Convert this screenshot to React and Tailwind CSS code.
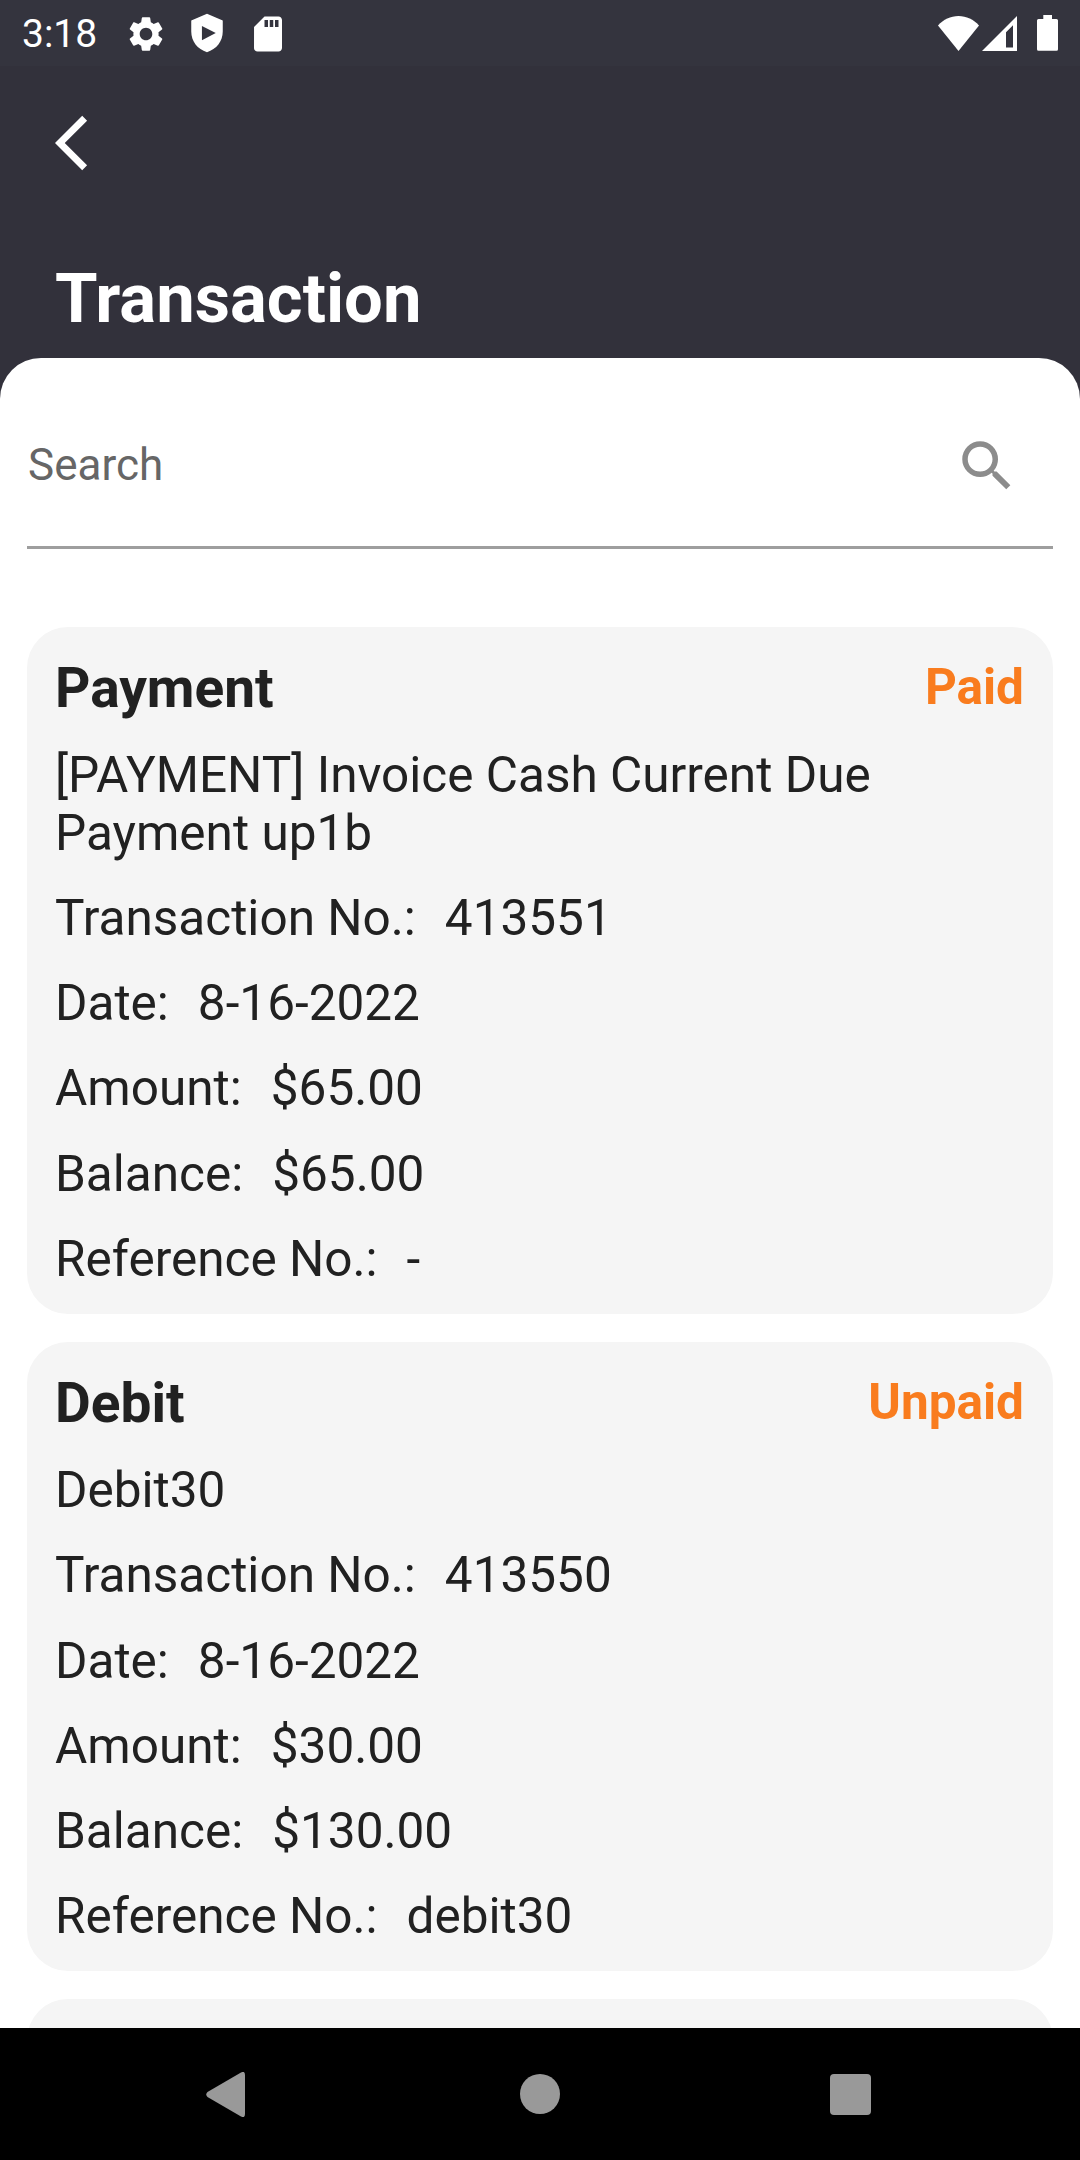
import React from "react";
import { MdArrowBackIos, MdSdCard, MdSearch, MdSettings } from "react-icons/md";

const transactions = [
  {
    type: "Payment",
    status: "Paid",
    description: "[PAYMENT] Invoice Cash Current Due Payment up1b",
    rows: [
      ["Transaction No.:", "413551"],
      ["Date:", "8-16-2022"],
      ["Amount:", "$65.00"],
      ["Balance:", "$65.00"],
      ["Reference No.:", "-"],
    ],
  },
  {
    type: "Debit",
    status: "Unpaid",
    description: "Debit30",
    rows: [
      ["Transaction No.:", "413550"],
      ["Date:", "8-16-2022"],
      ["Amount:", "$30.00"],
      ["Balance:", "$130.00"],
      ["Reference No.:", "debit30"],
    ],
  },
];

function ShieldPlay() {
  return (
    <svg viewBox="0 0 24 24" className="ml-[19px] size-[42px] shrink-0" fill="currentColor">
      <path
        fillRule="evenodd"
        d="M12 1 3 4.8v6.4c0 5.6 3.6 10.2 9 11.8 5.400-1.600 9-6.200 9-11.800V4.800zM9.100 8 17 12 9.100 16.200z"
      />
    </svg>
  );
}

function StatusBar() {
  return (
    <div className="flex h-[66px] shrink-0 items-center bg-[#34343e] pr-[22px] pl-[22px] text-white">
      <span className="w-[103px] pt-[2px] text-[39px] leading-[46px]">3:18</span>
      <MdSettings className="mt-[1px] size-[42px] shrink-0" />
      <ShieldPlay />
      <MdSdCard className="mt-[1px] ml-[19px] size-[42px] shrink-0" />
      <svg viewBox="0 0 41 35" className="ml-auto h-[35px] w-[41px]" fill="currentColor">
        <path d="M0 9.500C5.500 3.500 12.500 0 20.500 0S35.500 3.500 41 9.500L20.500 35z" />
      </svg>
      <svg viewBox="0 0 35 35" className="ml-[3px] h-[35px] w-[35px]" fill="currentColor">
        <path fillRule="evenodd" d="M35 0v35H0zM31 9.200 24 16.200V31.500H31z" />
      </svg>
      <svg viewBox="0 0 21 36" className="ml-[20px] h-[36px] w-[21px]" fill="currentColor">
        <path d="M6.300 0h8.700v4H19.500A1.500 1.500 0 0 1 21 5.500v28.700a1.500 1.500 0 0 1-1.500 1.500h-18A1.500 1.500 0 0 1 0 34.200V5.500A1.500 1.500 0 0 1 1.500 4H6.300z" />
      </svg>
    </div>
  );
}

function TransactionCard({ item }) {
  return (
    <article className="rounded-[41px] bg-[#f5f5f5] pt-[29px] pr-[27px] pb-[26px] pl-[28px]">
      <div className="flex items-start justify-between">
        <h2 className="text-[55px] leading-[65px] font-bold">{item.type}</h2>
        <span className="pt-[2px] pr-[2px] text-[49.500px] leading-[58px] font-bold text-[#f97c1e]">{item.status}</span>
      </div>
      <p className="mt-[25px] text-[49.500px] leading-[58px]">{item.description}</p>
      {item.rows.map(([label, value]) => (
        <div key={label} className="mt-[27.300px] flex gap-[29px] text-[49.500px] leading-[58px]">
          <span>{label}</span>
          <span>{value}</span>
        </div>
      ))}
    </article>
  );
}

export default function App() {
  return (
    <div className="flex h-[2160px] w-[1080px] flex-col overflow-hidden bg-[#32313b] font-['Roboto',sans-serif] text-[#212121]">
      <StatusBar />
      <header className="flex h-[291.500px] shrink-0 flex-col px-[55px] pt-[44px] text-white">
        <MdArrowBackIos className="size-[66px]" />
        <h1 className="mt-[83px] text-[68.750px] leading-[80px] font-bold">Transaction</h1>
      </header>
      <main className="flex min-h-0 flex-1 flex-col overflow-hidden rounded-t-[41px] bg-white pr-[27px] pl-[27px]">
        <div className="flex h-[191px] shrink-0 items-center justify-between border-b-[3px] border-[#9e9e9e] pt-[27px] pr-[33px]">
          <span className="pl-[1px] text-[44px] leading-[52px] text-[#666666]">Search</span>
          <MdSearch className="mt-[2px] size-[66px] text-[#8c8c8c]" />
        </div>
        <div className="mt-[78px] flex flex-col gap-[28px]">
          {transactions.map((item) => (
            <TransactionCard key={item.type} item={item} />
          ))}
          <div className="h-[629px] shrink-0 rounded-[41px] bg-[#f5f5f5]" />
        </div>
      </main>
      <nav className="flex h-[132px] shrink-0 items-center bg-black pr-[209px] pl-[206px] text-[#999999]">
        <svg viewBox="0 0 39 45" className="h-[45px] w-[39px]" fill="currentColor">
          <path d="M35 .500Q39-1.500 39 3v39q0 4.500-4 2.500L1.500 25Q-1 22.500 1.500 20z" />
        </svg>
        <span className="ml-[275px] size-[40px] rounded-full bg-[#999999]" />
        <span className="ml-auto size-[41px] rounded-[4px] bg-[#999999]" />
      </nav>
    </div>
  );
}
